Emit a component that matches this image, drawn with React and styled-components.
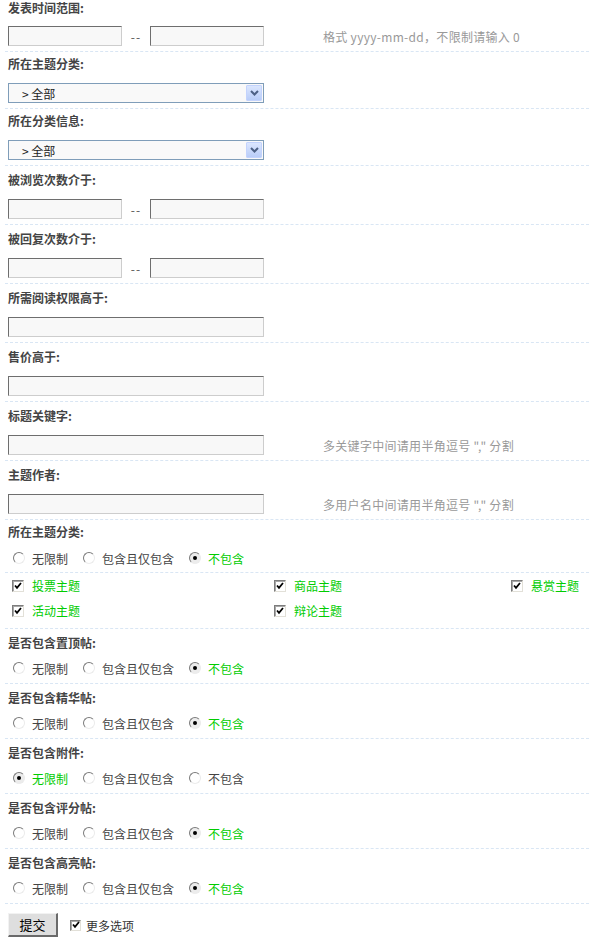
import styled, { createGlobalStyle } from "styled-components";

const GlobalStyle = createGlobalStyle`
  body {
    margin: 0;
    background: #fff;
    font-family: "Noto Sans CJK SC", "Noto Sans", sans-serif;
    font-size: 12px;
    color: #444;
  }
`;

const Form = styled.div`
  width: 589px;
`;

const Section = styled.div`
  margin-left: 5px;
  padding: ${(p) => p.$top ?? 7}px 0 ${(p) => p.$bottom ?? 5}px 3px;
  border-bottom: 1px dashed #d9e6f4;
`;

const Label = styled.div`
  font-weight: bold;
  line-height: 14px;
  height: 14px;
  color: #444;
  margin-bottom: ${(p) => p.$gap ?? 12}px;
`;

const Row = styled.div`
  display: flex;
  align-items: center;
  height: 20px;
`;

const TextInput = styled.input`
  box-sizing: border-box;
  width: ${(p) => (p.$wide ? 256 : 114)}px;
  height: 20px;
  margin: 0;
  padding: 0 3px;
  border: 1px solid;
  border-color: #6e6e6e #cdcdcd #cdcdcd #6e6e6e;
  background: #f8f8f8;
  font: 12px "Noto Sans CJK SC", sans-serif;
  outline: none;
`;

const Dash = styled.span`
  width: 28px;
  text-align: center;
  color: #555;
  letter-spacing: 1px;
`;

const Hint = styled.span`
  margin-left: 59px;
  color: #999;
  white-space: nowrap;
  letter-spacing: 0.3px;
`;

const SelectBox = styled.div`
  box-sizing: border-box;
  width: 256px;
  height: 20px;
  display: flex;
  align-items: center;
  padding-left: 13px;
  border: 1px solid #7f9db9;
  background: #f9f9f9;
  color: #222;
`;

const SelectText = styled.span`
  flex: 1;
`;

const SelectArrow = styled.span`
  box-sizing: border-box;
  width: 16px;
  height: 16px;
  margin-right: 1px;
  display: flex;
  align-items: center;
  justify-content: center;
  border: 1px solid #c3d3fd;
  border-radius: 1px;
  background: linear-gradient(#dbe6fe, #b9cdf8);
`;

const Choices = styled.div`
  display: flex;
  align-items: center;
  height: 20px;
  padding-left: 5px;
`;

const Choice = styled.label`
  display: flex;
  align-items: center;
  gap: 7px;
  margin-right: 15px;
  color: ${(p) => (p.$on ? "#00cc00" : "#444")};
  white-space: nowrap;
`;

const Radio = styled.span`
  box-sizing: border-box;
  width: 12px;
  height: 12px;
  border-radius: 50%;
  border: 1px solid;
  border-color: #7a7a7a #ebebeb #ebebeb #7a7a7a;
  background: ${(p) => (p.$on ? "#ececec" : "#fff")};
  display: flex;
  align-items: center;
  justify-content: center;

  &::after {
    content: "";
    width: 4px;
    height: 4px;
    border-radius: 50%;
    background: ${(p) => (p.$on ? "#000" : "transparent")};
  }
`;

const TypeGrid = styled.div`
  display: grid;
  grid-template-columns: 262px 237px 1fr;
  grid-auto-rows: 25px;
  margin-left: 5px;
  padding-left: 3px;
  padding-bottom: 5px;
  border-bottom: 1px dashed #d9e6f4;
`;

const TypeCell = styled.label`
  display: flex;
  align-items: center;
  gap: 8px;
  padding-left: 4px;
  color: #00cc00;
`;

const Box = styled.span`
  box-sizing: border-box;
  width: ${(p) => p.$size ?? 12}px;
  height: ${(p) => p.$size ?? 12}px;
  border: 1px solid;
  border-color: #7d7d7d #e2e0d8 #e2e0d8 #7d7d7d;
  box-shadow: inset 1px 1px 0 #a8a8a8;
  background: #fff;
  display: flex;
  align-items: center;
  justify-content: center;
`;

const Footer = styled.div`
  display: flex;
  align-items: center;
  gap: 12px;
  padding: 9px 0 0 8px;
`;

const SubmitButton = styled.button`
  box-sizing: border-box;
  width: 50px;
  height: 24px;
  padding: 0;
  border-style: solid;
  border-width: 1px 2px 2px 1px;
  border-color: #f2f2f2 #6a6a6a #6a6a6a #f2f2f2;
  background: #dedede;
  color: #000;
  font: 13px "Noto Sans CJK SC", sans-serif;
`;

const More = styled.label`
  display: flex;
  align-items: center;
  gap: 5px;
  color: #333;
`;

const Check = () => (
  <svg width="8" height="8" viewBox="0 0 8 8">
    <polyline points="1,3.5 3,5.8 7,1" fill="none" stroke="#000" strokeWidth="1.8" />
  </svg>
);

const Chevron = () => (
  <svg width="9" height="6" viewBox="0 0 9 6">
    <polyline points="1,1 4.5,4.5 8,1" fill="none" stroke="#4d6185" strokeWidth="2" />
  </svg>
);

const Select = ({ value }) => (
  <SelectBox>
    <SelectText>&gt; {value}</SelectText>
    <SelectArrow>
      <Chevron />
    </SelectArrow>
  </SelectBox>
);

const RangeRow = ({ hint }) => (
  <Row>
    <TextInput />
    <Dash>--</Dash>
    <TextInput />
    {hint && <Hint>{hint}</Hint>}
  </Row>
);

const OPTIONS = ["无限制", "包含且仅包含", "不包含"];

const RadioGroup = ({ picked }) => (
  <Choices>
    {OPTIONS.map((o, i) => (
      <Choice key={o} $on={i === picked}>
        <Radio $on={i === picked} />
        {o}
      </Choice>
    ))}
  </Choices>
);

const TYPES = ["投票主题", "商品主题", "悬赏主题", "活动主题", "辩论主题"];

const FLAGS = [
  { label: "是否包含置顶帖:", picked: 2 },
  { label: "是否包含精华帖:", picked: 2 },
  { label: "是否包含附件:", picked: 0 },
  { label: "是否包含评分帖:", picked: 2 },
  { label: "是否包含高亮帖:", picked: 2 },
];

export default function App() {
  return (
    <Form>
      <GlobalStyle />

      <Section $top={1}>
        <Label $gap={11}>发表时间范围:</Label>
        <RangeRow hint="格式 yyyy-mm-dd，不限制请输入 0" />
      </Section>

      <Section $top={5}>
        <Label>所在主题分类:</Label>
        <Select value="全部" />
      </Section>

      <Section $top={5}>
        <Label>所在分类信息:</Label>
        <Select value="全部" />
      </Section>

      <Section>
        <Label>被浏览次数介于:</Label>
        <RangeRow />
      </Section>

      <Section>
        <Label>被回复次数介于:</Label>
        <RangeRow />
      </Section>

      <Section>
        <Label>所需阅读权限高于:</Label>
        <Row>
          <TextInput $wide />
        </Row>
      </Section>

      <Section>
        <Label>售价高于:</Label>
        <Row>
          <TextInput $wide />
        </Row>
      </Section>

      <Section>
        <Label>标题关键字:</Label>
        <Row>
          <TextInput $wide />
          <Hint>多关键字中间请用半角逗号 "," 分割</Hint>
        </Row>
      </Section>

      <Section>
        <Label>主题作者:</Label>
        <Row>
          <TextInput $wide />
          <Hint>多用户名中间请用半角逗号 "," 分割</Hint>
        </Row>
      </Section>

      <Section $top={5} $bottom={4}>
        <Label $gap={9}>所在主题分类:</Label>
        <RadioGroup picked={2} />
      </Section>
      <TypeGrid>
        {TYPES.map((t) => (
          <TypeCell key={t}>
            <Box>
              <Check />
            </Box>
            {t}
          </TypeCell>
        ))}
      </TypeGrid>

      {FLAGS.map((f) => (
        <Section key={f.label}>
          <Label $gap={8}>{f.label}</Label>
          <RadioGroup picked={f.picked} />
        </Section>
      ))}

      <Footer>
        <SubmitButton>提交</SubmitButton>
        <More>
          <Box $size={11}>
            <Check />
          </Box>
          更多选项
        </More>
      </Footer>
    </Form>
  );
}
